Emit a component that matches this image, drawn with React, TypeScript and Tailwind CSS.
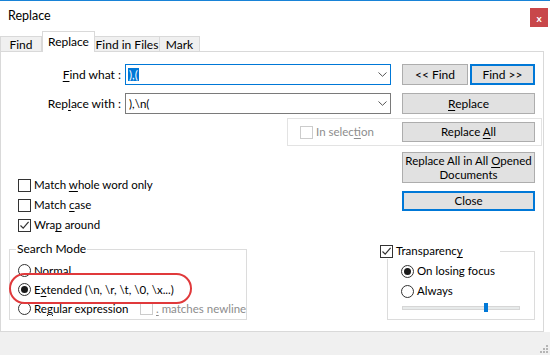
import type { ReactNode } from 'react';

function U({ children }: { children: ReactNode }) {
  return <span className="underline decoration-1 underline-offset-[2px]">{children}</span>;
}

function CheckBox({ checked, disabled }: { checked?: boolean; disabled?: boolean }) {
  return (
    <span
      className={
        disabled
          ? 'flex h-[13px] w-[13px] shrink-0 items-center justify-center border border-[#cccccc] bg-white'
          : 'flex h-[13px] w-[13px] shrink-0 items-center justify-center border border-[#333333] bg-white'
      }
    >
      {checked && (
        <svg width="11" height="11" viewBox="0 0 11 11">
          <path d="M1.5 5.5 L4.2 8.2 L9.6 1.8" fill="none" stroke="#333333" strokeWidth="1.2" />
        </svg>
      )}
    </span>
  );
}

function Radio({ checked }: { checked?: boolean }) {
  return (
    <span className="flex h-[13px] w-[13px] shrink-0 items-center justify-center rounded-full border border-[#333333] bg-white">
      {checked && <span className="h-[7px] w-[7px] rounded-full bg-[#1a1a1a]" />}
    </span>
  );
}

function Chevron() {
  return (
    <svg width="9" height="5" viewBox="0 0 9 5" className="shrink-0">
      <path d="M0.5 0.5 L4.5 4.3 L8.5 0.5" fill="none" stroke="#555555" strokeWidth="1" />
    </svg>
  );
}

const btn = 'flex items-center justify-center border border-[#adadad] bg-[#e1e1e1] text-center';
const btnDefault = 'flex items-center justify-center border-2 border-[#0078d7] bg-[#e1e1e1] text-center';

export default function App() {
  return (
    <div className="flex h-[355px] w-[550px] flex-col overflow-hidden whitespace-nowrap border-t border-[#1883d7] bg-white font-['Lato',sans-serif] text-[11.5px] leading-[16px] text-black">
      {/* title bar */}
      <div className="flex h-[30px] shrink-0 items-start justify-between">
        <span className="mt-[7px] pl-[8px] text-[12.5px]">Replace</span>
        <div className="mr-[2px] mt-[7px] flex h-[19px] w-[18px] items-center justify-center bg-[#c8474a] text-[10px] font-bold leading-none text-white">
          x
        </div>
      </div>

      {/* tabs */}
      <div className="flex h-[21px] shrink-0 items-end text-[12px]">
        <div className="flex h-[16px] w-[42px] items-center justify-center border border-b-0 border-[#d9d9d9] bg-[#f0f0f0]">
          <span>Find</span>
        </div>
        <div className="relative z-10 flex h-[21px] w-[53px] items-start justify-center border border-b-0 border-[#d9d9d9] bg-white pt-[2px]">
          <span>Replace</span>
        </div>
        <div className="flex h-[16px] w-[65px] items-center justify-center border border-b-0 border-l-0 border-[#d9d9d9] bg-[#f0f0f0]">
          <span>Find in Files</span>
        </div>
        <div className="flex h-[16px] w-[40px] items-center justify-center border border-b-0 border-l-0 border-[#d9d9d9] bg-[#f0f0f0]">
          <span>Mark</span>
        </div>
      </div>

      {/* tab page */}
      <div className="relative -mt-px h-[281px] w-[544px] shrink-0 border border-[#d9d9d9] bg-white pt-[12px]">
        <div className="flex items-center">
          <span className="w-[120px] text-right text-[12px]">
            <U>F</U>ind what :
          </span>
          <div className="ml-[4px] flex h-[21px] w-[266px] items-center border border-[#0078d7] bg-white pl-[2px] pr-[3px]">
            <span className="flex-1">
              <span className="bg-[#0078d7] px-px text-white">),(</span>
            </span>
            <Chevron />
          </div>
          <div className={`${btn} ml-[11px] h-[21px] w-[66px] text-[12px]`}>
            <span>&lt;&lt; Find</span>
          </div>
          <div className={`${btnDefault} ml-[2px] h-[21px] w-[65px] text-[12px]`}>
            <span>Find &gt;&gt;</span>
          </div>
        </div>

        <div className="mt-[8px] flex items-center">
          <span className="w-[120px] text-right text-[12px]">
            Rep<U>l</U>ace with :
          </span>
          <div className="ml-[4px] flex h-[21px] w-[266px] items-center border border-[#7a7a7a] bg-white pl-[3px] pr-[3px]">
            <span className="flex-1">),\n(</span>
            <Chevron />
          </div>
          <div className={`${btn} ml-[11px] h-[21px] w-[133px] text-[12px]`}>
            <span>
              <U>R</U>eplace
            </span>
          </div>
        </div>

        <div className="ml-[286px] mt-[4px] flex h-[28px] w-[255px] items-center border border-[#e3e3e3] pl-[12px]">
          <CheckBox disabled />
          <span className="ml-[3px] text-[#8d8d8d]">
            In selec<U>t</U>ion
          </span>
          <div className={`${btn} ml-auto mr-[6px] h-[20px] w-[133px]`}>
            <span>
              Replace <U>A</U>ll
            </span>
          </div>
        </div>

        <div className="flex">
          {/* left column */}
          <div className="w-[286px]">
            <div className="mt-[29px] flex flex-col pl-[17px]">
              <div className="flex h-[20px] items-center gap-[3px]">
                <CheckBox />
                <span>
                  Match <U>w</U>hole word only
                </span>
              </div>
              <div className="flex h-[20px] items-center gap-[3px]">
                <CheckBox />
                <span>
                  Match <U>c</U>ase
                </span>
              </div>
              <div className="flex h-[20px] items-center gap-[3px]">
                <CheckBox checked />
                <span>
                  Wra<U>p</U> around
                </span>
              </div>
            </div>

            <fieldset className="ml-[8px] mt-[6px] h-[79px] w-[238px] border border-[#dcdcdc]">
              <legend className="ml-[6px] px-[1px] text-[12px]">Search Mode</legend>
              <div className="flex flex-col pl-[8px] pt-[4px]">
                <div className="flex h-[19px] items-center gap-[3px]">
                  <Radio />
                  <span>Normal</span>
                </div>
                <div className="flex h-[19px] items-center gap-[3px]">
                  <Radio checked />
                  <span>
                    E<U>x</U>tended (\n, \r, \t, \0, \x...)
                  </span>
                </div>
                <div className="flex h-[19px] items-center">
                  <div className="flex w-[122px] items-center gap-[3px]">
                    <Radio />
                    <span>
                      Re<U>g</U>ular expression
                    </span>
                  </div>
                  <CheckBox disabled />
                  <span className="ml-[3px] text-[#8d8d8d]">
                    <U>.</U> matches newline
                  </span>
                </div>
              </div>
            </fieldset>
          </div>

          {/* right column */}
          <div className="flex-1">
            <div className={`${btn} ml-[115px] mt-[6px] h-[31px] w-[133px] leading-[14px]`}>
              <span>
                Replace All in All <U>O</U>pened
                <br />
                Documents
              </span>
            </div>
            <div className={`${btnDefault} ml-[115px] mt-[8px] h-[20px] w-[133px]`}>
              <span>Close</span>
            </div>

            <fieldset className="ml-[100px] mt-[32px] h-[77px] w-[148px] border border-[#dcdcdc]">
              <legend className="-ml-[8px] flex w-[120px] items-center gap-[3px]">
                <CheckBox checked />
                <span>
                  Transparenc<U>y</U>
                </span>
              </legend>
              <div className="flex flex-col pl-[13px] pt-[2px]">
                <div className="flex h-[20px] items-center gap-[3px]">
                  <Radio checked />
                  <span>On losing focus</span>
                </div>
                <div className="flex h-[20px] items-center gap-[3px]">
                  <Radio />
                  <span>Always</span>
                </div>
                <div className="relative ml-px mt-[5px] h-[4px] w-[118px] border border-[#d6d6d6] bg-[#e7eaea]">
                  <span className="absolute left-[81px] top-[-4px] h-[9px] w-[4px] bg-[#0078d7]" />
                </div>
              </div>
            </fieldset>
          </div>
        </div>

        {/* annotation */}
        <div className="absolute left-[8px] top-[221px] h-[31px] w-[183px] rounded-full border-2 border-[#e0393b]" />
      </div>

      {/* footer */}
      <div className="flex flex-1 items-end justify-end bg-[#f0f0f0] pb-[2px] pr-[2px]">
        <svg width="8" height="8" viewBox="0 0 8 8">
          <rect x="6" y="0" width="2" height="2" fill="#b5b5b5" />
          <rect x="3" y="3" width="2" height="2" fill="#b5b5b5" />
          <rect x="6" y="3" width="2" height="2" fill="#b5b5b5" />
          <rect x="0" y="6" width="2" height="2" fill="#b5b5b5" />
          <rect x="3" y="6" width="2" height="2" fill="#b5b5b5" />
          <rect x="6" y="6" width="2" height="2" fill="#b5b5b5" />
        </svg>
      </div>
    </div>
  );
}
